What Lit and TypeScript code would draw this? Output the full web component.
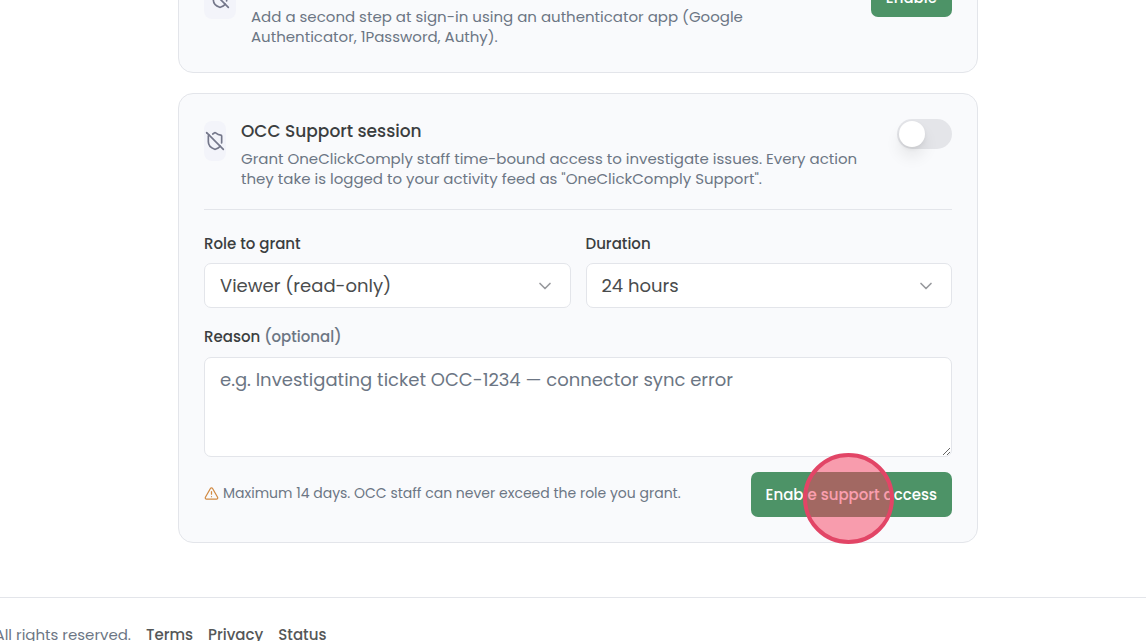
import { LitElement, html, css, svg } from "lit";
import { customElement } from "lit/decorators.js";

const shieldOff = html`<svg viewBox="0 0 24 24" aria-hidden="true">${svg`
  <path d="m2 2 20 20" />
  <path d="M5 5a1 1 0 0 0-1 1v7c0 5 3.5 7.500 7.670 8.940a1 1 0 0 0 .67.01c2.350-.82 4.480-1.970 5.900-3.710" />
  <path d="M9.309 3.652A12.252 12.252 0 0 0 11.240 2.280a1.170 1.170 0 0 1 1.520 0C14.510 3.810 17 5 19 5a1 1 0 0 1 1 1v7a9.784 9.784 0 0 1-.08 1.264" />
`}</svg>`;

const chevron = html`<svg class="chevron" viewBox="0 0 24 24" aria-hidden="true"><path d="m6 9 6 6 6-6" /></svg>`;

const warning = html`<svg viewBox="0 0 24 24" aria-hidden="true">
  <path d="m21.730 18-8-14a2 2 0 0 0-3.480 0l-8 14A2 2 0 0 0 4 21h16a2 2 0 0 0 1.730-3Z" />
  <path d="M12 9v4M12 17h.01" />
</svg>`;

@customElement("app-root")
export class AppRoot extends LitElement {
  static styles = css`
    :host {
      display: block;
      height: 100vh;
      overflow: hidden;
      background: #fff;
      color: #3b3e40;
      font-family: Poppins, Inter, sans-serif;
      font-size: 15px;
      line-height: 20px;
    }
    *, *::before { box-sizing: border-box; }
    svg {
      fill: none;
      stroke: currentColor;
      stroke-width: 2;
      stroke-linecap: round;
      stroke-linejoin: round;
    }
    h2, p { margin: 0; font-weight: 400; }
    button, select, textarea { font-family: inherit; }
    main {
      display: flex;
      flex-direction: column;
      gap: 20px;
      max-width: 810px;
      margin: -49px auto 54px;
      padding-left: 10px;
    }
    .card {
      padding: 25px;
      border: 1px solid #e3e5ea;
      border-radius: 15px;
      background: #f9fafc;
    }
    .head { display: flex; align-items: flex-start; gap: 15px; }
    .tile {
      flex: none;
      display: flex;
      align-items: center;
      justify-content: center;
      width: 32px;
      height: 40px;
      margin-top: 2px;
      border-radius: 8px;
      background: #f3f4fa;
      color: #74778a;
    }
    .tile.narrow { width: 22px; }
    .tile svg { flex: none; width: 20px; height: 20px; }
    .copy { flex: 1; }
    .copy p { max-width: 626px; margin-top: 5px; color: #6c7684; }
    .narrowcopy p { max-width: 500px; }
    h2 { font-size: 17px; line-height: 25px; font-weight: 500; }
    .btn {
      position: relative;
      height: 45px;
      padding: 0 15px;
      border: 0;
      border-radius: 7px;
      background: #4d9367;
      color: #fff;
      font-size: 15px;
      font-weight: 500;
      white-space: nowrap;
    }
    .btn.small { height: 40px; }
    .switch {
      appearance: none;
      flex: none;
      display: flex;
      align-items: center;
      width: 55px;
      height: 30px;
      margin: 0;
      padding: 0 2px;
      border-radius: 15px;
      background: #e4e5e9;
    }
    .switch::before {
      content: "";
      width: 26px;
      height: 26px;
      border-radius: 50%;
      background: #fff;
      box-shadow: 0 10px 15px rgb(0 0 0 / 8%), 0 2px 4px rgb(0 0 0 / 6%);
    }
    .form {
      display: grid;
      grid-template-columns: 1fr 1fr;
      gap: 15px;
      margin-top: 20px;
      padding-top: 24px;
      border-top: 1px solid #e3e5ea;
    }
    .field { display: flex; flex-direction: column; gap: 9px; min-width: 0; }
    .wide { grid-column: 1 / -1; }
    .wide.field { gap: 10px; margin-top: 4px; }
    label { font-weight: 500; }
    label span { color: #6c7684; }
    .select { display: grid; align-items: center; }
    .select > * { grid-area: 1 / 1; }
    select, textarea {
      width: 100%;
      margin: 0;
      border: 1px solid #e3e5ea;
      border-radius: 7px;
      background: #fff;
      color: #4a4c4d;
      font-size: 18px;
      line-height: 25px;
    }
    select { appearance: none; height: 45px; padding: 0 15px; }
    .chevron {
      justify-self: end;
      width: 20px;
      height: 20px;
      margin-right: 16px;
      color: #97999d;
      pointer-events: none;
    }
    textarea { display: block; height: 100px; padding: 9px 15px; resize: vertical; }
    textarea::placeholder { color: #6c7684; opacity: 1; }
    .actions { display: flex; align-items: center; justify-content: space-between; }
    .note {
      display: flex;
      align-items: center;
      gap: 4px;
      padding-bottom: 3px;
      color: #6c7684;
      font-size: 14px;
    }
    .note svg { width: 15px; height: 15px; color: #d18a43; }
    .press {
      position: absolute;
      left: 52px;
      top: -19px;
      width: 91px;
      height: 91px;
      border: 4px solid #e24566;
      border-radius: 50%;
      background: rgb(247 62 94 / 50%);
    }
    footer {
      display: flex;
      gap: 15px;
      padding: 27px 0;
      border-top: 1px solid #e3e5ea;
      color: #6c7684;
      white-space: nowrap;
    }
    .legal { display: flex; justify-content: flex-end; width: 131px; }
    footer a { color: #555758; font-weight: 500; text-decoration: none; }
  `;

  render() {
    return html`
      <main>
        <section class="card">
          <div class="head">
            <div class="tile">${shieldOff}</div>
            <div class="copy narrowcopy">
              <h2>Two-factor authentication</h2>
              <p>Add a second step at sign-in using an authenticator app (Google Authenticator, 1Password, Authy).</p>
            </div>
            <button class="btn small" type="button">Enable</button>
          </div>
        </section>
        <section class="card">
          <div class="head">
            <div class="tile narrow">${shieldOff}</div>
            <div class="copy">
              <h2 id="session">OCC Support session</h2>
              <p>Grant OneClickComply staff time-bound access to investigate issues. Every action they take is logged to your activity feed as "OneClickComply Support".</p>
            </div>
            <input class="switch" type="checkbox" role="switch" aria-labelledby="session" />
          </div>
          <form class="form">
            <div class="field">
              <label for="role">Role to grant</label>
              <div class="select">
                <select id="role"><option>Viewer (read-only)</option></select>
                ${chevron}
              </div>
            </div>
            <div class="field">
              <label for="duration">Duration</label>
              <div class="select">
                <select id="duration"><option>24 hours</option></select>
                ${chevron}
              </div>
            </div>
            <div class="field wide">
              <label for="reason">Reason <span>(optional)</span></label>
              <textarea id="reason" placeholder="e.g. Investigating ticket OCC-1234 — connector sync error"></textarea>
            </div>
            <div class="actions wide">
              <p class="note">${warning}Maximum 14 days. OCC staff can never exceed the role you grant.</p>
              <button class="btn" type="button">Enable support access<span class="press"></span></button>
            </div>
          </form>
        </section>
      </main>
      <footer>
        <div class="legal">All rights reserved.</div>
        <a href="#terms">Terms</a>
        <a href="#privacy">Privacy</a>
        <a href="#status">Status</a>
      </footer>
    `;
  }
}
